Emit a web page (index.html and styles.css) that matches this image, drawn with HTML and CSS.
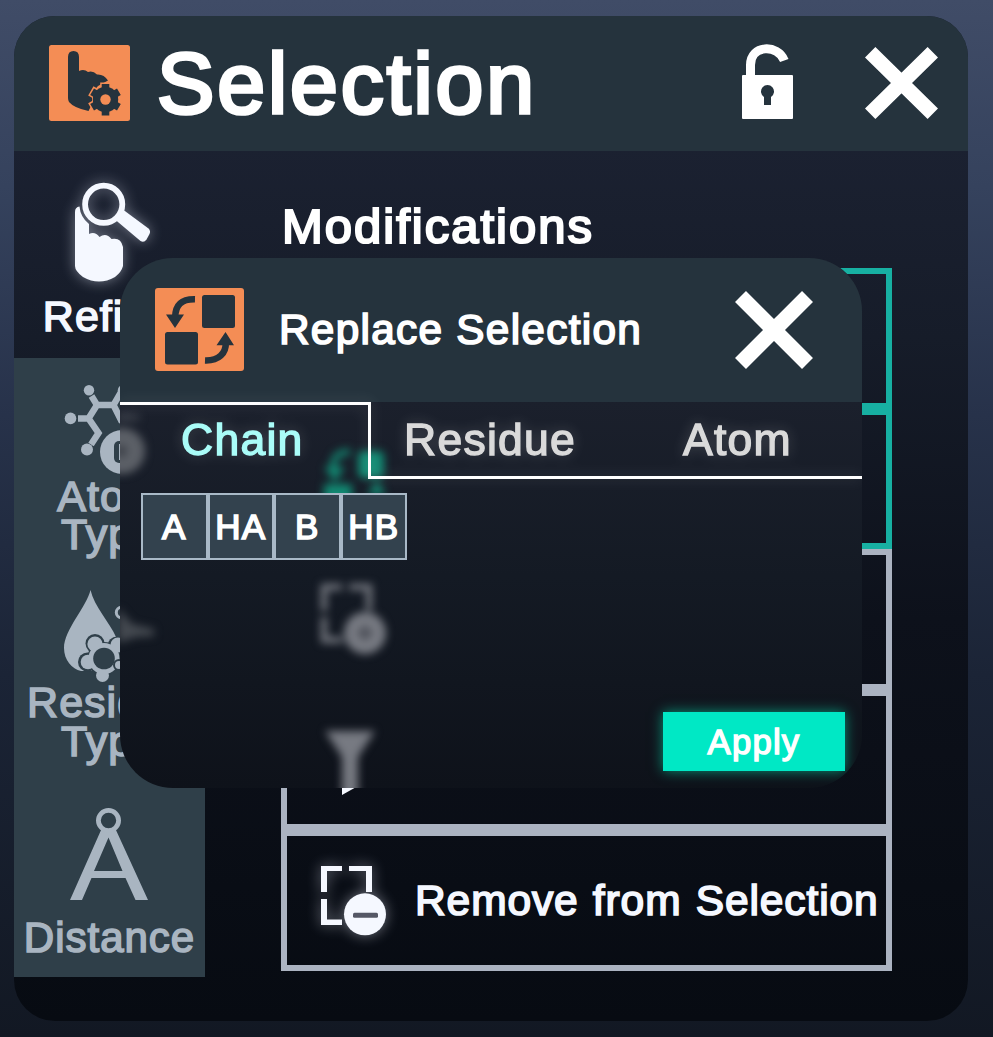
FILE: index.html
```html
<!DOCTYPE html>
<html lang="en">
<head>
<meta charset="utf-8">
<title>Selection</title>
<link rel="stylesheet" href="styles.css">
</head>
<body>
<main class="panel">
  <header class="panel-header">
    <svg class="logo" viewBox="49 45 81 76" width="81" height="76">
      <rect x="49" y="45" width="81" height="76" rx="2.5" fill="#f48d55"/>
      <path fill="#25333d" d="M68 57Q68 51 73.5 51Q79 51 79 57V71Q84 68.500 88 72Q93 70.500 97 74.500Q104 74 108 80.500L98 86L92 93V104L88.500 111Q74 108 69 102Q68 100 68 98Z"/>
      <g fill="#f48d55" stroke="#f48d55" stroke-width="3"><circle cx="105.500" cy="99.500" r="12"/><path d="M101.700 84h7.600v31h-7.600zM90.200 95l3.800-6.600 26.800 15.500-3.800 6.600zM94 110.500l-3.800-6.600 26.800-15.500 3.800 6.600z"/></g>
      <g fill="#25333d"><circle cx="105.500" cy="99.500" r="12.700"/><path d="M101.700 84h7.600v31.500h-7.600zM90.200 95l3.800-6.600 26.800 15.500-3.800 6.600zM94 110.500l-3.800-6.600 26.800-15.500 3.800 6.600z"/></g>
      <circle cx="105.500" cy="99.500" r="5.200" fill="#f48d55"/>
    </svg>
    <h1 class="title">Selection</h1>
    <svg class="lock" viewBox="742 45 51 74" width="51" height="74">
      <path d="M750.500 77V65C750.500 44.500 778 44 784.300 60.500" fill="none" stroke="#fff" stroke-width="9"/>
      <rect x="742" y="75" width="51" height="44" rx="1" fill="#fff"/>
      <path fill="#25333d" d="M764 105V97A6.500 6.500 0 1 1 771 97V105Z"/>
    </svg>
    <svg class="close" viewBox="865 47 73 72" width="73" height="72"><path d="M870.200 52.200L932.800 113.800M932.800 52.200L870.200 113.800" stroke="#fff" stroke-width="14.800"/></svg>
  </header>

  <div class="panel-body">
    <nav class="tabs">
      <div class="tab active">
        <svg class="tab-icon glow" viewBox="64 179 90 106" width="90" height="106">
          <g fill="#f5f8ff">
            <path d="M75 212Q75 207 79.500 206.500A25 25 0 0 0 89 224V234Q95 231 99.500 237Q106 232 111.500 239Q121 237 123 247V266Q121.500 272 115 277Q99 286 83 277Q75 271 75 266Z"/>
            <path d="M115 219.500L123.500 210L148.500 228.500Q151 231 149.500 234L146.500 239.500Q144 243 140.500 241Z"/>
          </g>
          <circle cx="103.700" cy="204.300" r="18.600" fill="none" stroke="#f5f8ff" stroke-width="5.800"/>
        </svg>
        <span class="tab-label">Refine</span>
      </div>
      <div class="tab">
        <svg class="tab-icon" viewBox="64 380 90 96" width="90" height="96">
          <g fill="#a9b5c1"><circle cx="89" cy="389.200" r="5.200"/><circle cx="123" cy="389.200" r="5.200"/><circle cx="70.500" cy="417.400" r="5.800"/><circle cx="87" cy="448.500" r="6"/></g>
          <path d="M91.500 395L97 404H113.500L121 391M113.500 404L122 421M78 417.400H88.500L97 404M88.500 417.400L98.500 432L91 443.500" fill="none" stroke="#a9b5c1" stroke-width="6.500"/>
          <circle cx="122" cy="451" r="23" fill="#2f3f49"/>
          <circle cx="122" cy="451" r="22" fill="#a9b5c1"/>
          <rect x="114" y="440" width="17" height="22" rx="5" fill="#2f3f49"/><path d="M121 443v16" stroke="#a9b5c1" stroke-width="4"/>
        </svg>
        <span class="tab-label">Atom<br>Type</span>
      </div>
      <div class="tab">
        <svg class="tab-icon" viewBox="64 587 90 96" width="90" height="96">
          <path fill="#a9b5c1" d="M90.500 590C87 606 64 630 64 648C64 660 72 669 81 671L104 671L116 637C110 623 94 606 90.500 590Z"/>
          <circle cx="121.500" cy="612.500" r="5.200" fill="none" stroke="#a9b5c1" stroke-width="3"/>
          <g fill="#2f3f49"><circle cx="104" cy="659" r="17"/><circle cx="95" cy="643.500" r="9.500"/><circle cx="87.500" cy="662" r="9.500"/><circle cx="102.500" cy="675.500" r="8"/><circle cx="117" cy="646" r="9.500"/></g>
          <g fill="#a9b5c1"><circle cx="104" cy="658.500" r="15.500"/><circle cx="95" cy="644" r="7.600"/><circle cx="88" cy="662" r="7.300"/><circle cx="102.500" cy="675.500" r="6.500"/><circle cx="118" cy="645" r="7.600"/></g>
          <circle cx="104" cy="658.500" r="10.800" fill="#2f3f49"/><circle cx="119" cy="665" r="5" fill="#a9b5c1" stroke="#2f3f49" stroke-width="2"/>
        </svg>
        <span class="tab-label">Residue<br>Type</span>
      </div>
      <div class="tab distance">
        <svg class="tab-icon" viewBox="64 805 90 98" width="90" height="98">
          <path fill="#a9b5c1" fill-rule="evenodd" d="M101.500 829H115.500L148 900H135.500L125.500 878H91.500L82 900H70ZM108.500 837.500L94 871H122.500Z"/>
          <circle cx="108.500" cy="820.500" r="10.100" fill="#2f3f49" stroke="#a9b5c1" stroke-width="4.800"/>
        </svg>
        <span class="tab-label">Distance</span>
      </div>
    </nav>

    <section class="content">
      <h2 class="section-title">Modifications</h2>
      <div class="actions">
        <div class="action teal"></div>
        <div class="action teal"></div>
        <div class="action"></div>
        <div class="action">
          <svg class="action-icon" viewBox="321 725 66 70" width="66" height="70"><path fill="#f5f8ff" d="M325 730H375L358 757V785L342 794V757Z"/></svg>
        </div>
        <div class="action">
          <svg class="action-icon glow" viewBox="321 866 66 70" width="66" height="70">
            <path fill="#f5f8ff" d="M321 866h21v5h-15v21h-6zM349 866h23v26h-6v-21h-17zM321 899h6v20.500h15v5.500h-21z"/>
            <circle cx="365" cy="914.300" r="21" fill="#f5f8ff"/><rect x="353" y="912.800" width="25" height="5" rx="1.500" fill="#555866"/>
          </svg>
          <span class="action-label">Remove from Selection</span>
        </div>
      </div>
    </section>
  </div>
</main>

<div class="modal">
  <header class="modal-header">
    <svg class="modal-logo" viewBox="155 288 89 83" width="89" height="83">
      <rect x="155" y="288" width="89" height="83" rx="3" fill="#f48d55"/>
      <g fill="#25333d"><rect x="202" y="295" width="33" height="33" rx="2.500"/><rect x="165" y="332" width="33" height="32.500" rx="2.500"/><path d="M166 314.500H184L175 328ZM216.500 345.300H234L225.500 332Z"/></g>
      <path d="M195 299.300C181 299 175.500 305 175.200 317M205 360.500C219 361 226 353 225.800 343" fill="none" stroke="#25333d" stroke-width="6.600"/>
    </svg>
    <h2 class="modal-title">Replace Selection</h2>
    <svg class="modal-close" viewBox="735 291 78 78" width="78" height="78"><path d="M740.500 296.500L807.500 363.500M807.500 296.500L740.500 363.500" stroke="#fff" stroke-width="15.500"/></svg>
  </header>
  <div class="modal-body">
    <svg class="backdrop-shapes" viewBox="120 402 742 386" width="742" height="386" aria-hidden="true">
      <g fill="#5c6067"><circle cx="122" cy="451" r="23"/><path d="M118 412l22 3v5l-22 2z" opacity=".5"/></g>
      <path fill="#3c4048" d="M116 445h7q4 3 4 6t-4 6h-7z"/>
      <path fill="#444950" d="M118 608L132 624L154 629V636L136 637L118 643Z"/>
      <g fill="#128a73"><rect x="358" y="451" width="26" height="27" rx="5"/><rect x="324" y="484" width="28" height="28"/><path d="M324 467H345L335 482ZM367 495L377 481L386 495Z"/><path d="M350 452C336 452 333 458 333 470" fill="none" stroke="#128a73" stroke-width="6"/></g>
      <g fill="#777a82"><path d="M321 584h21v6h-15v21h-6zM349 584h23v26h-6v-20h-17zM321 617h6v20h15v6h-21z"/><circle cx="365" cy="633" r="21"/><path d="M325 731H375L358 757V800H342V757Z"/></g>
      <path d="M365 625v16M357 633h16" stroke="#3c3f48" stroke-width="3.500"/>
    </svg>
    <div class="segments">
      <div class="segment current">Chain</div>
      <div class="segment residue">Residue</div>
      <div class="segment atom">Atom</div>
    </div>
    <div class="cells">
      <div class="cell">A</div><div class="cell">HA</div><div class="cell">B</div><div class="cell">HB</div>
    </div>
    <button class="apply">Apply</button>
  </div>
</div>
</body>
</html>
```
FILE: styles.css
```css
* { box-sizing: border-box; }

body {
  margin: 0;
  height: 1037px;
  padding: 16px 25px 16px 14px;
  overflow: hidden;
  position: relative;
  background: linear-gradient(#404c67 0%, #35425d 18%, #27324a 40%, #1b2436 65%, #121823 100%);
  font-family: "Liberation Sans", Arial, sans-serif;
  color: #fff;
}

h1, h2 { margin: 0; font-weight: 400; white-space: nowrap; }
svg { display: block; flex: none; overflow: visible; }
.glow { filter: drop-shadow(0 0 7px rgba(235, 240, 255, .45)); }

.panel {
  width: 954px;
  height: 1005px;
  border-radius: 41px;
  overflow: hidden;
  background: linear-gradient(#1b2131 13%, #161c29 32%, #0d111b 60%, #070b12 100%);
}

.panel-header {
  display: flex;
  height: 135px;
  padding: 29px 30px 0 35px;
  background: #25333d;
}

.title {
  margin-left: 27px;
  width: 585px;
  font-size: 86px;
  line-height: 76px;
  letter-spacing: 2.900px;
  -webkit-text-stroke: 3.600px #fff;
}

.close { margin: 2px 0 0 72px; }

.panel-body { display: flex; height: 870px; }

.tabs { width: 191px; }

.tab {
  display: flex;
  flex-direction: column;
  align-items: center;
  height: 206.600px;
  padding-top: 23px;
  background: #2f3f49;
  color: #a9b5c1;
}

.tab.active { background: none; color: #f5f8ff; padding-top: 28px; }
.tab.distance { padding-top: 34px; }
.tab-icon { margin-right: 1px; }

.tab-label {
  font-size: 43px;
  line-height: 38.500px;
  letter-spacing: 1px;
  text-align: center;
  -webkit-text-stroke: 1.600px currentColor;
}

.tab.active .tab-label { margin-top: 12px; margin-right: 3px; }
.tab.distance .tab-label { margin-top: 16px; font-size: 42px; }

.content { padding: 46px 0 0 76px; }

.section-title {
  height: 71px;
  margin-left: 1px;
  font-size: 49px;
  line-height: 58px;
  letter-spacing: 2px;
  -webkit-text-stroke: 2.200px #fff;
}

.actions { width: 611px; }

.action {
  display: flex;
  align-items: flex-start;
  height: 140.600px;
  padding: 30px 0 0 34px;
  border: 6px solid #abb3c1;
}

.action.teal { border-color: #17b0a2; }

.action-label {
  margin-left: 28px;
  font-size: 42.500px;
  line-height: 69px;
  letter-spacing: .9px;
  word-spacing: 1.500px;
  white-space: nowrap;
  color: #f5f8ff;
  -webkit-text-stroke: 1.700px #f5f8ff;
}

.modal {
  position: absolute;
  left: 120px;
  top: 258px;
  width: 742px;
  height: 530px;
  border-radius: 53px;
  overflow: hidden;
  background: linear-gradient(#1b202c 27%, #141a24 60%, #0e121a 100%);
}

.modal-header {
  display: flex;
  height: 144px;
  padding: 30px 49px 0 35px;
  background: #25333d;
}

.modal-title {
  flex: 1;
  margin-left: 35px;
  font-size: 42.300px;
  line-height: 84px;
  letter-spacing: 1.300px;
  -webkit-text-stroke: 1.700px #fff;
}

.modal-close { margin-top: 3px; }

.modal-body { position: relative; height: 386px; }
.backdrop-shapes { position: absolute; left: 0; top: 0; filter: blur(4px); }

.segments {
  position: relative;
  display: flex;
  height: 77px;
  font-size: 44.500px;
  line-height: 76px;
  letter-spacing: 1.250px;
  color: #dadada;
  -webkit-text-stroke: 1.400px currentColor;
  filter: drop-shadow(0 0 7px rgba(255, 255, 255, .18));
}

.segment { border-bottom: 3.500px solid #fff; }

.segment.current {
  width: 251px;
  padding-left: 61px;
  border: solid #fff;
  border-width: 3px 3px 0 0;
  line-height: 70px;
  color: #aafcf8;
}

.segment.residue { width: 279px; padding-left: 33px; }
.segment.atom { flex: 1; padding-left: 33px; }

.cells { position: relative; display: flex; width: 266px; margin: 14px 0 0 21px; }

.cell {
  flex: 1;
  height: 67px;
  border: 2px solid #a9b9c7;
  background: #33424e;
  font-size: 35px;
  line-height: 64px;
  letter-spacing: 1.200px;
  text-align: center;
  -webkit-text-stroke: 1.600px #fff;
}

.apply {
  position: relative;
  display: block;
  width: 182px;
  height: 59px;
  margin: 152px 0 0 543px;
  padding: 0;
  border: 0;
  background: #00e8c5;
  box-shadow: 0 0 12px rgba(0, 232, 180, .6);
  color: #fff;
  font: 34.700px/60px "Liberation Sans", Arial, sans-serif;
  letter-spacing: 1.200px;
  -webkit-text-stroke: 1.400px #fff;
}
```
